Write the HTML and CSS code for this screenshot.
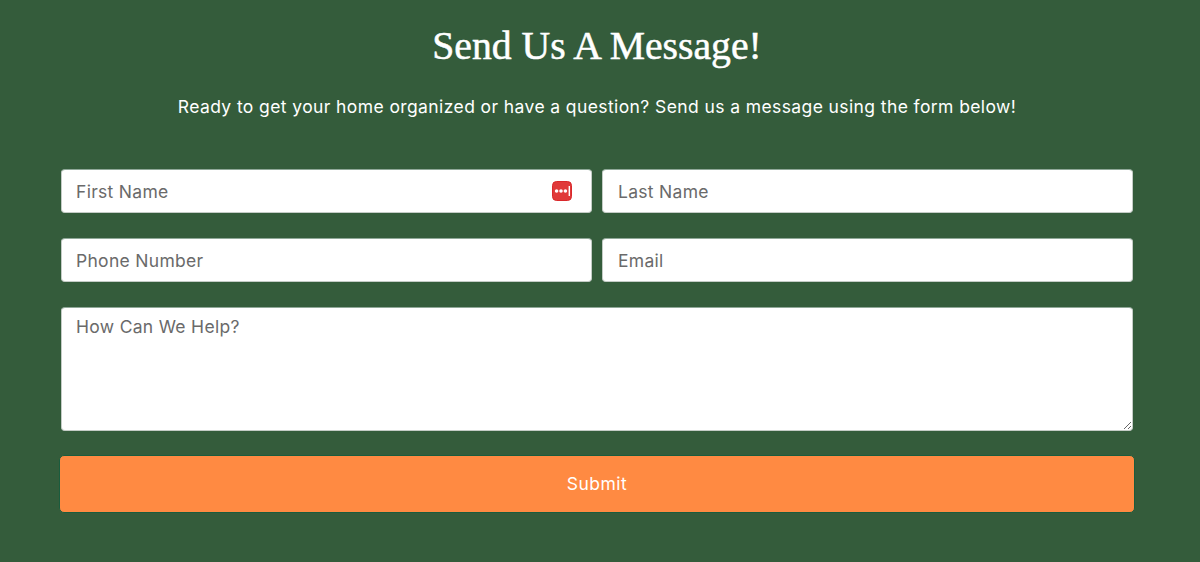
FILE: index.html
```html
<!DOCTYPE html>
<html lang="en">
<head>
<meta charset="utf-8">
<title>Send Us A Message!</title>
<link rel="stylesheet" href="styles.css">
</head>
<body>
<main class="section">
  <h1 class="title">Send Us A Message!</h1>
  <p class="intro">Ready to get your home organized or have a question? Send us a message using the form below!</p>
  <form class="form">
    <div class="row">
      <div class="field">
        <input class="input" type="text" placeholder="First Name">
        <svg class="pw-icon" viewBox="0 0 20 20" aria-hidden="true">
          <rect x="0.5" y="0.5" width="19" height="19" rx="4" fill="#e03a3a" stroke="#d9282b"/>
          <circle cx="4.6" cy="10" r="1.8" fill="#fff"/>
          <circle cx="9" cy="10" r="1.8" fill="#fff"/>
          <circle cx="13.4" cy="10" r="1.8" fill="#fff"/>
          <rect x="16.6" y="5" width="1.4" height="10" fill="#fff"/>
        </svg>
      </div>
      <div class="field"><input class="input input-right" type="text" placeholder="Last Name"></div>
    </div>
    <div class="row">
      <div class="field"><input class="input" type="text" placeholder="Phone Number"></div>
      <div class="field"><input class="input input-right" type="email" placeholder="Email"></div>
    </div>
    <textarea class="input message" placeholder="How Can We Help?"></textarea>
    <button class="submit" type="button">Submit</button>
  </form>
</main>
</body>
</html>
```
FILE: styles.css
```css
* { box-sizing: border-box; }
html, body { margin: 0; height: 100%; }
body {
  background: #345c3b;
  font-family: "Inter", "Open Sans", sans-serif;
  overflow: hidden;
}
.section { padding: 21px 66px 0 60px; text-align: center; }
.title {
  margin: 0;
  font-family: "Liberation Serif", serif;
  font-size: 39.7px;
  line-height: 50px;
  font-weight: 400;
  color: #fff;
  -webkit-text-stroke: 0.5px #fff;
}
.intro {
  margin: 23px 0 0;
  font-size: 17.5px;
  line-height: 26px;
  color: #fff;
  letter-spacing: 0.4px;
}
.form { display: flex; flex-direction: column; margin-top: 49px; padding: 0 1px; }
.row { display: flex; gap: 10px; margin-bottom: 25px; }
.field { position: relative; flex: 1; }
.input {
  display: block;
  width: 100%;
  height: 44px;
  padding: 0 14px;
  border: 1px solid #c4ccc6;
  border-top-color: #8fa898;
  border-radius: 4px;
  background: #fff;
  font-family: inherit;
  font-size: 17.5px;
  letter-spacing: 0.3px;
  color: #333;
}
.input-right { padding-left: 15px; }
.input::placeholder { color: #6a6a6a; opacity: 1; }
.message { height: 124px; padding: 8px 14px; margin-bottom: 24px; }
.pw-icon { position: absolute; top: 12px; right: 20px; width: 20px; height: 20px; }
.submit {
  height: 58px;
  margin: 0 -2px;
  padding: 0 0 2px;
  border: 1px solid #1a5c3e;
  border-radius: 5px;
  background: #ff8a42;
  color: #fff;
  font-family: inherit;
  font-size: 17.5px;
  letter-spacing: 0.5px;
}
```
